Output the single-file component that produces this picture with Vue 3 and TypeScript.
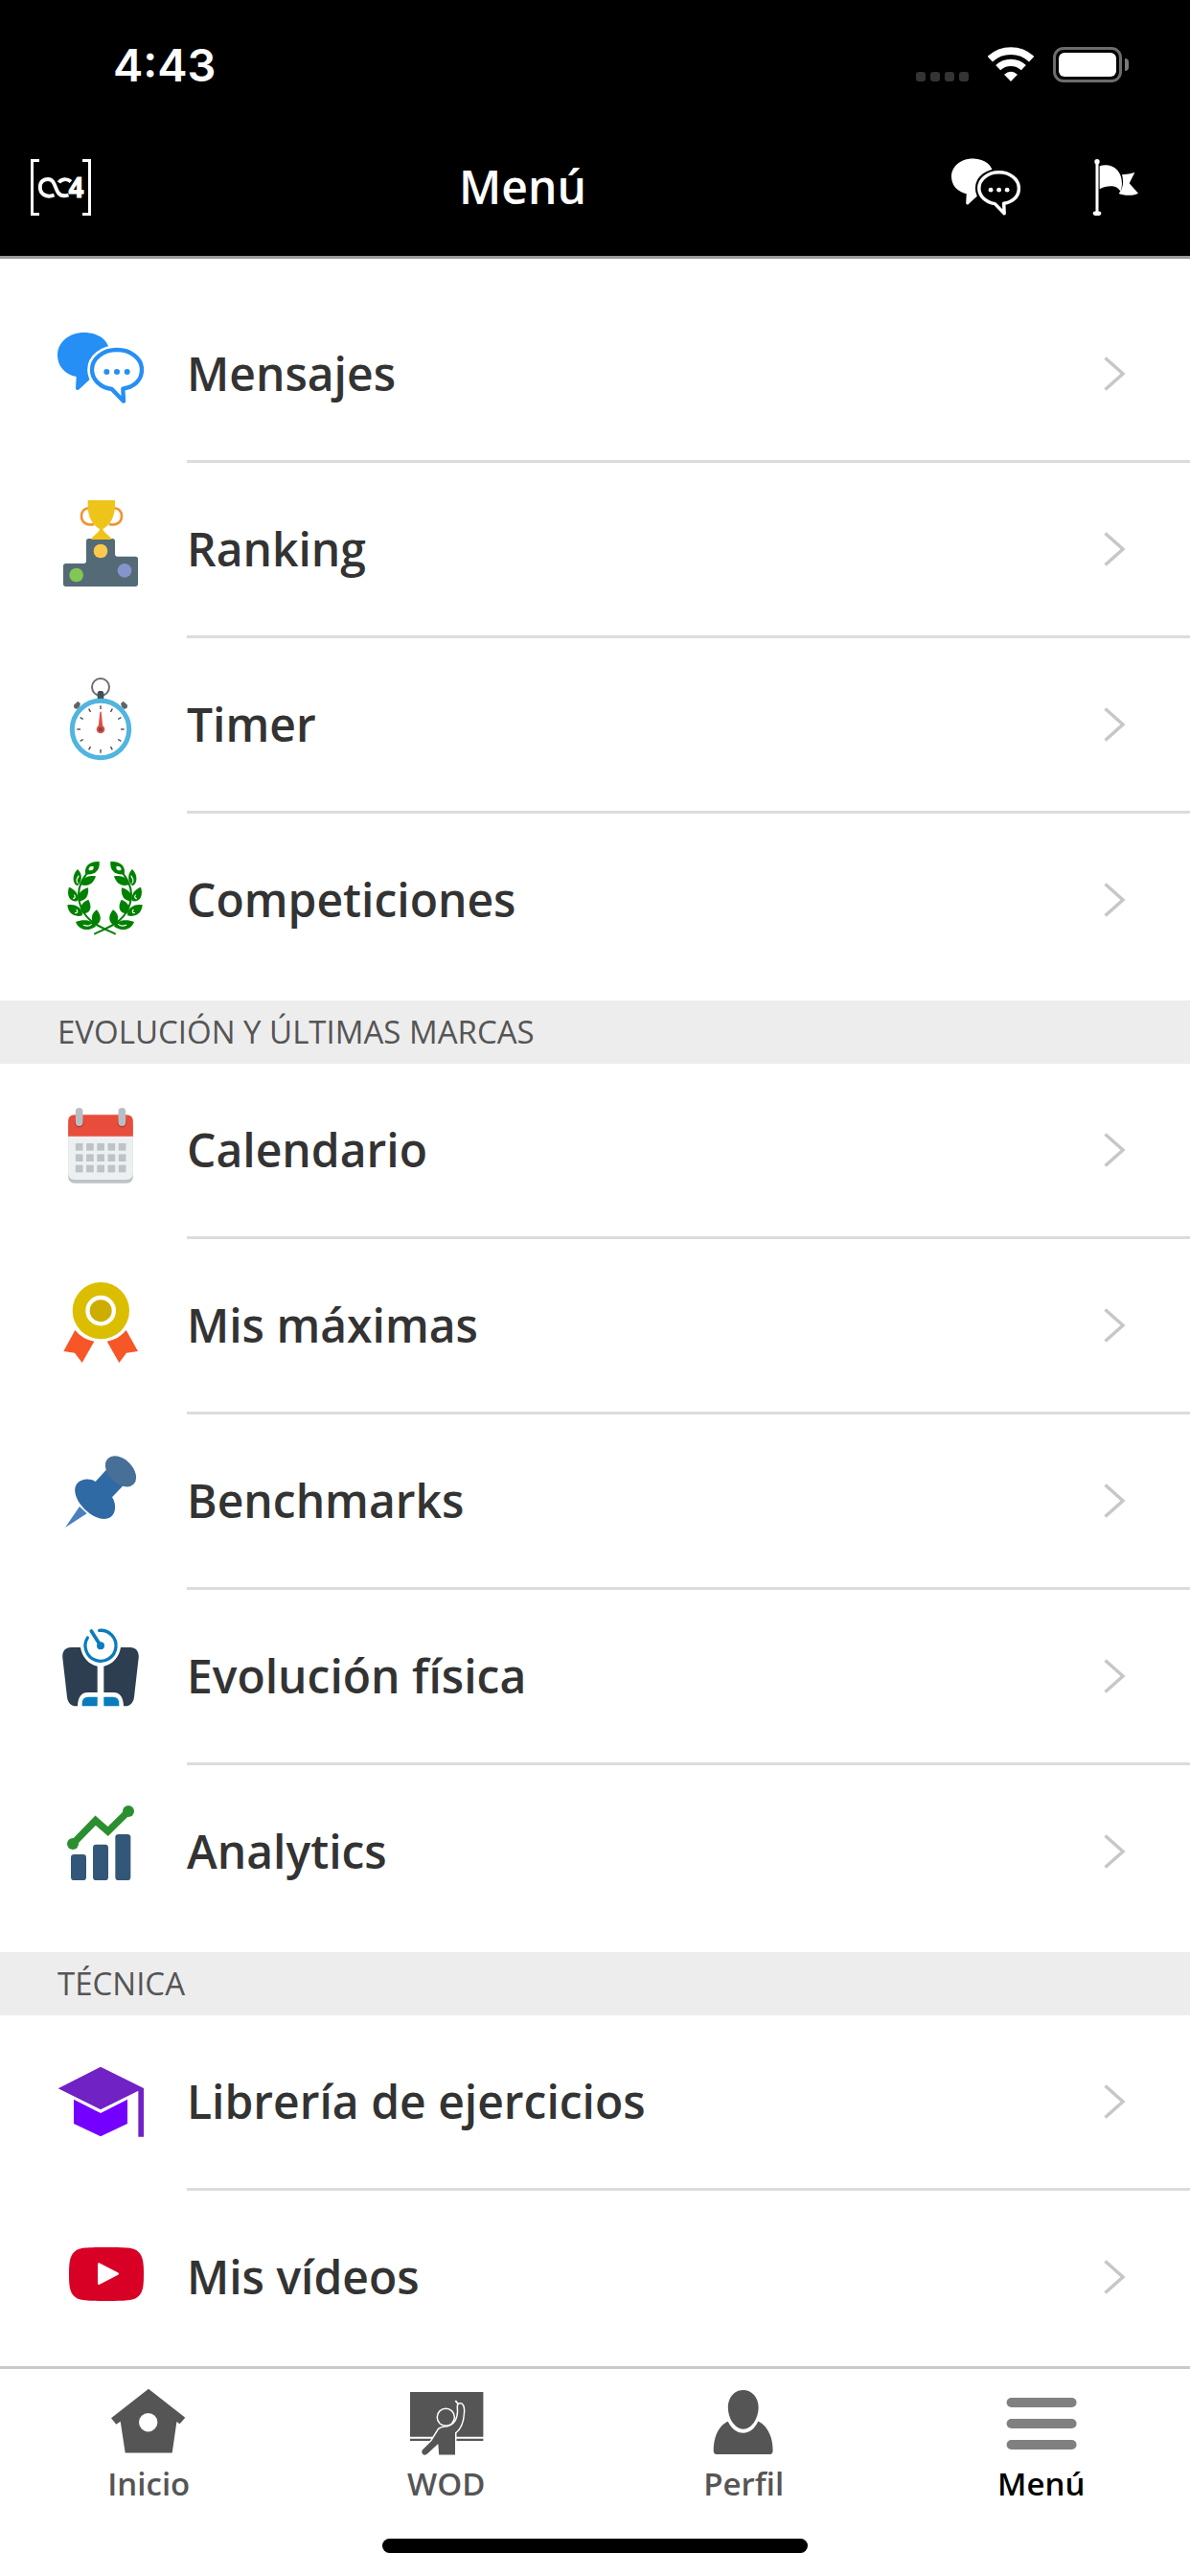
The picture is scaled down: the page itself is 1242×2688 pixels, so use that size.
<script setup lang="ts">
interface MenuItem {
  label: string
  icon: string
  viewBox: string
}

interface MenuSection {
  title?: string
  items: MenuItem[]
}

interface Tab {
  label: string
  icon: string
  active?: boolean
}

const leaves = `
  <path d="M240 883C205 866 158 852 136 806C118 764 122 722 165 680" fill="none" stroke="#008000" stroke-width="6" stroke-linecap="round"/>
  <path d="M191 657C160 655 142 672 148 697C178 700 194 684 191 657Z"/>
  <path d="M123 681C105 698 106 726 122 733C136 722 141 698 123 681Z"/>
  <path d="M180 703C153 698 136 709 132 729C156 739 174 724 180 703Z"/>
  <path d="M96 737C88 762 97 784 122 781C129 762 116 744 96 737Z"/>
  <path d="M156 739C128 746 120 766 126 782C151 780 159 761 156 739Z"/>
  <path d="M91 793C93 818 111 833 138 826C139 804 119 788 91 793Z"/>
  <path d="M157 776C135 784 126 802 139 820C163 820 170 800 157 776Z"/>
  <path d="M183 808C166 818 161 840 177 857C198 850 200 828 183 808Z"/>
  <path d="M117 846C126 870 153 879 180 860C168 838 139 838 117 846Z"/>
  <path d="M158 684C156 674 166 670 173 673C174 683 168 687 158 684Z" fill="#fff"/>
  <g fill="none" stroke="#fff" stroke-width="3.500" stroke-linecap="round">
    <path d="M123 724C115 716 124 708 126 702"/><path d="M110 773Q118 770 113 762"/>
    <path d="M116 818Q126 817 120 808"/><path d="M142 856Q156 862 166 854"/>
  </g>`

const chat = `
  <path d="M143 81C190 81 224 106 224 150C224 190 190 215 165 224L126 260Q117 264 117 254L119 219C84 212 60 186 60 152C60 112 96 81 143 81Z" fill="currentColor"/>
  <path d="M246 135C289 135 324 162 324 197C324 229 298 249 265 257L267 296L230 258C194 253 168 228 168 197C168 162 203 135 246 135Z" fill="none" stroke="var(--gap)" stroke-width="29" stroke-linejoin="round"/>
  <path d="M246 135C289 135 324 162 324 197C324 232 298 252 265 257L267 296L230 258C194 253 168 228 168 197C168 162 203 135 246 135Z" fill="var(--gap)" stroke="currentColor" stroke-width="13" stroke-linejoin="round"/>
  <g fill="currentColor"><circle cx="214" cy="204" r="9"/><circle cx="246" cy="204" r="9"/><circle cx="278" cy="204" r="9"/></g>`

const podium = `
  <path d="M158 726H232Q240 726 240 734V774Q240 782 248 782H304Q312 782 312 790V868Q312 876 304 876H86Q78 876 78 868V812Q78 804 86 804H142Q150 804 150 796V734Q150 726 158 726Z" fill="#546a76"/>
  <g fill="none" stroke="#f2932d" stroke-width="8"><path d="M160 631C145 629 135 641 135 656C135 674 152 687 174 681"/><path d="M236 631C251 629 261 641 261 656C261 674 244 687 222 681"/></g>
  <path d="M158 605H237Q240 605 240 608V625C239 658 225 685 202 696C205 708 222 714 230 729H165C173 714 190 708 192 696C170 685 155 658 155 625V608Q155 605 158 605Z" fill="#efc41a"/>
  <circle cx="195" cy="765" r="22" fill="#fbca4d"/><circle cx="119" cy="840" r="22" fill="#82c653"/><circle cx="270" cy="826" r="22" fill="#8694cb"/>`

const ticks = Array.from(
  { length: 12 },
  (_, i) => `<path d="M195 169V180" transform="rotate(${i * 30} 195 243)"/>`,
).join('')

const timer = `
  <circle cx="195" cy="111" r="27" fill="none" stroke="#6e6e6e" stroke-width="6"/>
  <path d="M189 123H201L205 129V150H185V129Z" fill="#414e55"/>
  <g fill="#606366"><path d="M111 167L124 155L132 163L129 172L121 180L112 176Z"/><path d="M279 167L266 155L258 163L261 172L269 180L278 176Z"/></g>
  <circle cx="195" cy="243" r="89" fill="#fff" stroke="#50b5df" stroke-width="15"/>
  <g stroke="#444" stroke-width="4">${ticks}</g>
  <path d="M193 188H197L202 236H188Z" fill="#e14d43"/>
  <circle cx="195" cy="243" r="13" fill="#e14d43"/><circle cx="195" cy="243" r="7" fill="#7d4a3c"/>`

const days = [132, 166, 200]
  .flatMap((y) => [0, 1, 2, 3, 4].map((c) => `<rect x="${56.5 + c * 33.7}" y="${y}" width="23" height="23"/>`))
  .join('')

const calendar = `
  <rect x="33.5" y="60" width="203" height="197" rx="20" fill="#bdc3c7"/>
  <path d="M33.5 100H236.5V226Q236.5 246 216 246H54Q33.5 246 33.5 226Z" fill="#ecf0f1"/>
  <path d="M33.5 110V63Q33.5 43 54 43H216Q236.5 43 236.5 63V110Z" fill="#e74c3c"/>
  <g fill="#b8382c"><circle cx="68" cy="68" r="14"/><circle cx="202" cy="68" r="14"/></g>
  <g fill="#b9bec3"><rect x="56.5" y="21" width="23" height="57" rx="11"/><rect x="190.5" y="21" width="23" height="57" rx="11"/></g>
  <g fill="#bdc3c7">${days}</g>`

const medal = `
  <g fill="#f75627"><path d="M115 264Q138 293 175 299L137 366L114 335L79 330Z"/><path d="M275 264Q252 293 215 299L253 366L276 335L312 330Z"/></g>
  <circle cx="196" cy="203" r="89" fill="#dcbe00"/>
  <circle cx="195.500" cy="203" r="41" fill="#cdad00" stroke="#fff" stroke-width="13"/>`

const pin = `
  <path d="M84 312L129 246L152 268Z" fill="#4a80c0"/>
  <path d="M115 200C110 168 148 150 179 168L214 130L264 182L231 217C247 240 245 285 206 285C166 283 119 238 115 200Z" fill="#306aa4"/>
  <ellipse cx="258" cy="136" rx="57" ry="37.500" transform="rotate(45 258 136)" fill="#476f98"/>`

const scaleHalf = `
  <path d="M102 687H132C137 718 158 741 185 746V828H155C135 828 124 842 123 871H118C101 871 92 858 90 842L76 720C74 700 84 687 102 687Z" fill="#2c3e50"/>
  <path d="M137 871V863Q137 842 156 842H185V871Z" fill="#0a7cbd"/>`

const bodyScale = `
  ${scaleHalf}<g transform="matrix(-1 0 0 1 390 0)">${scaleHalf}</g>
  <path d="M191 634A48 48 0 1 1 154 657" fill="none" stroke="#0a7cbd" stroke-width="10" stroke-linecap="round"/>
  <path d="M166 636L195 682" stroke="#0a7cbd" stroke-width="11" stroke-linecap="round"/><circle cx="195" cy="682" r="12" fill="#0a7cbd"/>`

const analytics = `
  <g fill="#335778"><rect x="102" y="225" width="48" height="81" rx="10"/><rect x="171" y="194" width="48" height="112" rx="10"/><rect x="241" y="162" width="48" height="144" rx="10"/></g>
  <path d="M108 192L179 119L218 153L282 90" fill="none" stroke="#2b8f2f" stroke-width="22"/>
  <g fill="#2b8f2f"><circle cx="108" cy="192" r="18"/><circle cx="282" cy="90" r="18"/></g>`

const graduation = `
  <path d="M111 212L195 255L279 212V288L195 328L111 288Z" fill="#7400ff"/>
  <path d="M62 178L195 110L330 177V329H313V185L195 244Z" fill="#7122c4"/>`

const video = `
  <path d="M213 675C285 675 300 677 313 689C328 703 330 724 330 759C330 795 328 815 313 829C300 841 285 843 213 843C141 843 126 841 113 829C98 815 96 795 96 759C96 724 98 703 113 689C126 677 141 675 213 675Z" fill="#d90026"/>
  <path d="M190 728L248 758L190 788Z" fill="#fff" stroke="#fff" stroke-width="8" stroke-linejoin="round"/>`

const sections: MenuSection[] = [
  {
    items: [
      { label: 'Mensajes', icon: chat, viewBox: '60 57 270 270' },
      { label: 'Ranking', icon: podium, viewBox: '60 606 270 270' },
      { label: 'Timer', icon: timer, viewBox: '60 75 270 270' },
      {
        label: 'Competiciones',
        icon: `<g fill="#008000">${leaves}<g transform="matrix(-1 0 0 1 417 0)">${leaves}</g></g>`,
        viewBox: '60 624 270 270',
      },
    ],
  },
  {
    title: 'EVOLUCIÓN Y ÚLTIMAS MARCAS',
    items: [
      { label: 'Calendario', icon: calendar, viewBox: '0 0 270 270' },
      { label: 'Mis máximas', icon: medal, viewBox: '60 96 270 270' },
      { label: 'Benchmarks', icon: pin, viewBox: '60 75 270 270' },
      { label: 'Evolución física', icon: bodyScale, viewBox: '60 624 270 270' },
      { label: 'Analytics', icon: analytics, viewBox: '60 63 270 270' },
    ],
  },
  {
    title: 'TÉCNICA',
    items: [
      { label: 'Librería de ejercicios', icon: graduation, viewBox: '60 66 270 270' },
      { label: 'Mis vídeos', icon: video, viewBox: '60 615 270 270' },
    ],
  },
]

const tabs: Tab[] = [
  {
    label: 'Inicio',
    icon: `<path fill-rule="evenodd" d="M45 2.700L83.300 32.700L77.600 39.300L74.400 37L69.700 69.600H20.700L15.700 36.700L11.300 39.700L6 33.300ZM44.700 28A9.700 9.700 0 1 0 44.700 47.400A9.700 9.700 0 1 0 44.700 28Z" fill="#555"/>`,
  },
  {
    label: 'WOD',
    icon: `<path d="M7 6H83.400V52.700H7ZM7 54.700H83.400V57H7Z" fill="#555"/>
      <g fill="#555" stroke="#fff" stroke-width="3" paint-order="stroke">
        <path d="M37 45L29.500 57L19.800 66.500C18 70 21.500 73.500 25 70.500L36.300 60L37.200 71.400H54V48.200C59.500 44.500 62.300 37 62.800 27C63.300 21.500 61.500 18.300 59.500 18.400C57 18.300 56.800 20.500 57.200 24C57.800 32 54.500 41.200 46 42.400C41.500 42.700 39 43.500 37 45Z"/>
        <circle cx="44.300" cy="32.300" r="8.300"/>
      </g>
      <path d="M57.500 19L54.300 15" stroke="#fff" stroke-width="1.800"/>`,
  },
  {
    label: 'Perfil',
    icon: `<path d="M28.800 36.700C32 44 38 48.700 44.700 48.700S57 44 60.200 36.500C70 41 75.600 53 75.600 67Q75.600 71 72.500 71H16.800Q13.700 71 13.700 67C13.700 53 19 41 28.800 36.700Z" fill="#555"/>
      <path d="M44.700 4C53.500 4 60.600 11.500 60.600 22C60.600 33.500 53.500 44.700 44.700 44.700S28.800 33.500 28.800 22C28.800 11.500 35.900 4 44.700 4Z" fill="#555"/>`,
  },
  {
    label: 'Menú',
    icon: `<g fill="#808080"><rect x="8.600" y="12" width="73" height="10" rx="5"/><rect x="8.600" y="34" width="73" height="10" rx="5"/><rect x="8.600" y="56" width="73" height="10" rx="5"/></g>`,
    active: true,
  },
]
</script>

<template>
  <div class="screen">
    <header class="header">
      <div class="status">
        <span class="time">4:43</span>
        <div class="dots"><i v-for="n in 4" :key="n"></i></div>
        <svg class="wifi" viewBox="394 147 144 111">
          <g fill="none" stroke="#fff">
            <path d="M401 185A95.500 95.500 0 0 1 531 185" stroke-width="23" />
            <path d="M426 212A59 59 0 0 1 506 212" stroke-width="22" />
          </g>
          <path d="M445 233Q466 216 487 233L466 255Z" fill="#fff" />
        </svg>
        <div class="battery"><div class="charge"></div></div>
        <div class="nub"></div>
      </div>
      <div class="nav">
        <svg class="logo" viewBox="32 166 63 59">
          <path d="M41 167.500H33.500V223.500H41M86 167.500H93.500V223.500H86" fill="none" stroke="#fff" stroke-width="3" />
          <path d="M56.500 203.500C48 207 41.800 202 41.800 195.500C41.800 189 46 187 50 187C60 187 56 204.300 67 204.300Q69 204.300 71.500 203.500M61.500 190.500C64 186.500 70 186 74 189.500" fill="none" stroke="#fff" stroke-width="3.900" />
          <text x="71.500" y="206" class="logo-digit">4</text>
        </svg>
        <h1 class="title">Menú</h1>
        <svg class="nav-chat" viewBox="60 57 270 270" v-html="chat"></svg>
        <svg class="flag" viewBox="720 495 150 180">
          <g fill="#fff">
            <circle cx="735" cy="506" r="8" />
            <rect x="730.500" y="506" width="9" height="162" />
            <ellipse cx="735" cy="668" rx="13" ry="7" />
            <path d="M743 520C778 509 813 530 813 575Q813 588 808 600C800 578 766 579 743 592Z" />
            <path d="M813 547Q835 546 853 540L836 574L864 605C845 614 820 613 803 606C817 590 819 570 813 547Z" />
          </g>
        </svg>
      </div>
    </header>

    <main class="menu">
      <section v-for="(section, s) in sections" :key="s" class="section">
        <h2 v-if="section.title" class="section-title">{{ section.title }}</h2>
        <ul class="list">
          <li v-for="item in section.items" :key="item.label" class="row">
            <svg class="icon" :viewBox="item.viewBox" v-html="item.icon"></svg>
            <div class="row-body">
              <span class="label">{{ item.label }}</span>
              <svg class="chevron" viewBox="0 0 24 38">
                <path d="M2.500 2.500L21 19L2.500 35.500" fill="none" stroke="#c7c7c7" stroke-width="3.500" />
              </svg>
            </div>
          </li>
        </ul>
      </section>
    </main>

    <footer class="tabbar">
      <nav class="tabs">
        <a v-for="tab in tabs" :key="tab.label" class="tab" :class="{ active: tab.active }">
          <svg class="tab-icon" viewBox="0 0 90 72" v-html="tab.icon"></svg>
          <span>{{ tab.label }}</span>
        </a>
      </nav>
      <div class="home-indicator"></div>
    </footer>
  </div>
</template>

<style>
body {
  background: #fff;
}
</style>

<style scoped>
.screen {
  width: 1242px;
  height: 2688px;
  overflow: hidden;
  display: flex;
  flex-direction: column;
  background: #fff;
  color: #333;
  font-family: 'Open Sans', 'Noto Sans', sans-serif;
}

.header {
  flex: none;
  box-sizing: border-box;
  height: 270px;
  background: #000;
  border-bottom: 3px solid #9b999b;
  color: #fff;
}

.status {
  display: flex;
  height: 123px;
  padding: 0 64px 0 118px;
  box-sizing: border-box;
}

.time {
  flex: 1;
  margin-top: 38px;
  font: 600 47px/60px Inter, sans-serif;
}

.dots {
  display: flex;
  gap: 5px;
  margin: 75px 20px 0 0;
}

.dots i {
  width: 10px;
  height: 10px;
  border-radius: 3px;
  background: #343434;
}

.wifi {
  width: 48px;
  height: 37px;
  margin: 49px 20px 0 0;
}

.battery {
  box-sizing: border-box;
  width: 72px;
  height: 37px;
  margin-top: 49px;
  padding: 3px;
  border: 3px solid #6d6d6d;
  border-radius: 11px;
}

.charge {
  height: 100%;
  border-radius: 6px;
  background: #fff;
}

.nub {
  width: 4px;
  height: 13px;
  margin: 61px 0 0 3px;
  border-radius: 0 4px 4px 0;
  background: #7a7a7a;
}

.nav {
  display: flex;
  align-items: center;
  height: 144px;
  padding: 0 52px 0 32px;
}

.logo {
  width: 63px;
  height: 59px;
}

.logo-digit {
  fill: #fff;
  stroke: #fff;
  stroke-width: 0.8px;
  font: 700 28px 'Open Sans', sans-serif;
}

.title {
  flex: 1;
  margin: 0 0 0 384px;
  font-size: 48px;
  line-height: 64px;
  font-weight: 600;
}

.nav-chat {
  --gap: #000;
  color: #fff;
  width: 72px;
  height: 72px;
  margin-right: 75px;
}

.flag {
  width: 50px;
  height: 60px;
}

.menu {
  flex: none;
  height: 2199px;
  padding-top: 30px;
  box-sizing: border-box;
}

.section:not(:last-child) {
  padding-bottom: 15px;
}

.section-title {
  margin: 0;
  padding-left: 60px;
  height: 66px;
  background: #ededed;
  color: #555;
  font-size: 33px;
  line-height: 66px;
  font-weight: 400;
}

.list {
  margin: 0;
  padding: 0;
  list-style: none;
}

.row {
  display: flex;
  padding-left: 60px;
}

.icon {
  --gap: #fff;
  color: #258ff5;
  flex: none;
  width: 90px;
  height: 90px;
  margin: 39px 45px 0 0;
}

.row-body {
  flex: 1;
  display: flex;
  align-items: center;
  height: 180px;
  padding-right: 67px;
  border-bottom: 3px solid #dcdcdc;
}

.row:last-child .row-body {
  border-bottom: 0;
}

.label {
  flex: 1;
  font-size: 48px;
  line-height: 64px;
  font-weight: 600;
}

.chevron {
  width: 24px;
  height: 38px;
}

.tabbar {
  flex: 1;
  border-top: 3px solid #c9cbca;
  background: #fff;
}

.tabs {
  display: flex;
  height: 177px;
}

.tab {
  flex: 1;
  display: flex;
  flex-direction: column;
  align-items: center;
  padding-top: 18px;
  color: #555;
  font-size: 33px;
  line-height: 46px;
  font-weight: 600;
}

.tab-icon {
  width: 90px;
  height: 72px;
  margin-bottom: 7px;
}

.active {
  color: #000;
}

.home-indicator {
  width: 444px;
  height: 15px;
  margin: 0 auto;
  border-radius: 8px;
  background: #000;
}
</style>
